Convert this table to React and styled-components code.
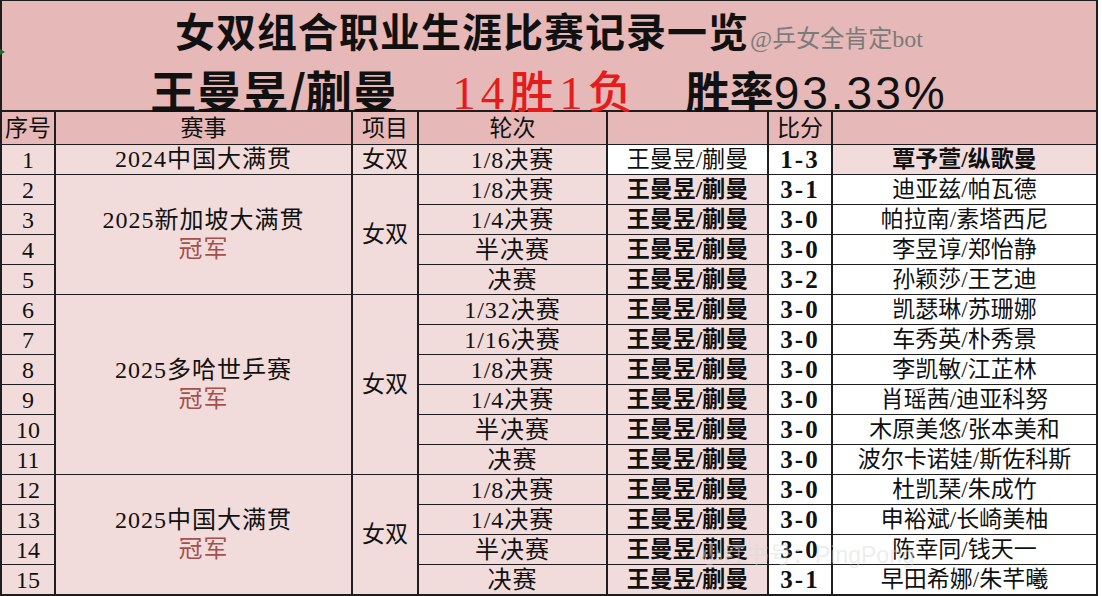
import React from "react";
import styled, { createGlobalStyle } from "styled-components";

const PINK = "#e6b8b7";
const LIGHT = "#f2dcdb";
const LINE = "#1e1e1e";

const GlobalStyle = createGlobalStyle`
  * { box-sizing: border-box; }
  html, body { margin: 0; background: #fff; }
  body {
    font-family: "Liberation Serif", "Noto Sans CJK SC", serif;
    color: #111;
  }
`;

const Sheet = styled.div`
  position: relative;
  width: 1098px;
`;

const TitleBlock = styled.header`
  height: 110px;
  background: ${PINK};
  border-top: 1px solid ${LINE};
  border-left: 2px solid ${LINE};
  border-right: 2px solid ${LINE};
  display: flex;
  flex-direction: column;
  align-items: center;
  padding-top: 9px;
`;

const TitleLine = styled.div`
  display: flex;
  align-items: baseline;
`;

const MainTitle = styled.h1`
  margin: 0;
  font-family: "Noto Sans CJK SC", sans-serif;
  font-weight: 700;
  font-size: 40px;
  line-height: 1;
  letter-spacing: 1px;
`;

const Credit = styled.span`
  font-size: 24px;
  color: #7b7b7b;
  margin-left: 1px;
`;

const StatsLine = styled.div`
  display: flex;
  align-items: baseline;
  gap: 54px;
  margin-top: 12px;
  line-height: 1;
`;

const PairName = styled.span`
  font-family: "Noto Sans CJK SC", sans-serif;
  font-weight: 600;
  font-size: 46px;
`;

const Record = styled.span`
  color: #e41c1c;
  font-size: 47px;
  letter-spacing: 5px;
  margin-right: -6px;
`;

const RecordWord = styled.span`
  font-family: "Noto Sans CJK SC", sans-serif;
  font-weight: 500;
  font-size: 45px;
`;

const Rate = styled.span`
  font-family: "Noto Sans CJK SC", sans-serif;
  font-weight: 600;
  font-size: 44px;
`;

const RateValue = styled.span`
  font-family: "Liberation Sans", sans-serif;
  font-weight: 400;
  font-size: 46px;
  letter-spacing: 3px;
`;

const Table = styled.div`
  display: grid;
  grid-template-columns: 52px 295px 64px 187px 159px 62px 263px;
  grid-template-rows: 32px repeat(15, 29px);
  gap: 1px 2px;
  background: ${LINE};
  border: 2px solid ${LINE};
`;

const Cell = styled.div`
  display: flex;
  align-items: center;
  justify-content: center;
  background: ${(p) => p.$bg || "#fff"};
  font-size: ${(p) => p.$size || 23}px;
  letter-spacing: ${(p) => p.$track || 0}px;
  line-height: 1;
  white-space: nowrap;
  font-weight: ${(p) => (p.$bold ? 600 : 400)};
  grid-row: ${(p) => (p.$span ? `span ${p.$span}` : "auto")};
`;

const HeadCell = styled(Cell)`
  background: ${PINK};
  font-size: 23px;
`;

const EventCell = styled(Cell)`
  flex-direction: column;
  line-height: 29px;
  font-size: 24px;
  letter-spacing: 1px;
`;

const Champion = styled.span`
  color: #a4504e;
`;

const Score = styled(Cell)`
  font-size: 25px;
  font-weight: 700;
  letter-spacing: 2px;
`;

const Watermark = styled.div`
  position: absolute;
  left: 700px;
  top: 536px;
  font-family: "Liberation Sans", "Noto Sans CJK SC", sans-serif;
  font-size: 23px;
  color: rgba(215, 215, 215, 0.45);
  pointer-events: none;
  white-space: nowrap;
`;

const Marker = styled.span`
  position: absolute;
  left: 0;
  top: 49px;
  width: 0;
  height: 0;
  border-top: 3px solid transparent;
  border-bottom: 3px solid transparent;
  border-left: 5px solid #1e6b2c;
`;

const PAIR = "王曼昱/蒯曼";

const groups = [
  {
    event: "2024中国大满贯",
    champion: false,
    matches: [["1/8决赛", "1-3", "覃予萱/纵歌曼"]],
  },
  {
    event: "2025新加坡大满贯",
    champion: true,
    matches: [
      ["1/8决赛", "3-1", "迪亚兹/帕瓦德"],
      ["1/4决赛", "3-0", "帕拉南/素塔西尼"],
      ["半决赛", "3-0", "李昱谆/郑怡静"],
      ["决赛", "3-2", "孙颖莎/王艺迪"],
    ],
  },
  {
    event: "2025多哈世乒赛",
    champion: true,
    matches: [
      ["1/32决赛", "3-0", "凯瑟琳/苏珊娜"],
      ["1/16决赛", "3-0", "车秀英/朴秀景"],
      ["1/8决赛", "3-0", "李凯敏/江芷林"],
      ["1/4决赛", "3-0", "肖瑶茜/迪亚科努"],
      ["半决赛", "3-0", "木原美悠/张本美和"],
      ["决赛", "3-0", "波尔卡诺娃/斯佐科斯"],
    ],
  },
  {
    event: "2025中国大满贯",
    champion: true,
    matches: [
      ["1/8决赛", "3-0", "杜凯琹/朱成竹"],
      ["1/4决赛", "3-0", "申裕斌/长崎美柚"],
      ["半决赛", "3-0", "陈幸同/钱天一"],
      ["决赛", "3-1", "早田希娜/朱芊曦"],
    ],
  },
];

const App = () => {
  let no = 0;
  return (
    <Sheet>
      <GlobalStyle />
      <Marker />
      <TitleBlock>
        <TitleLine>
          <MainTitle>女双组合职业生涯比赛记录一览</MainTitle>
          <Credit>@乒女全肯定bot</Credit>
        </TitleLine>
        <StatsLine>
          <PairName>{PAIR}</PairName>
          <Record>
            14<RecordWord>胜</RecordWord>1<RecordWord>负</RecordWord>
          </Record>
          <Rate>
            胜率<RateValue>93.33%</RateValue>
          </Rate>
        </StatsLine>
      </TitleBlock>
      <Table>
        <HeadCell>序号</HeadCell>
        <HeadCell>赛事</HeadCell>
        <HeadCell>项目</HeadCell>
        <HeadCell>轮次</HeadCell>
        <HeadCell />
        <HeadCell>比分</HeadCell>
        <HeadCell />
        {groups.map((g) =>
          g.matches.map(([round, score, rival], i) => {
            no += 1;
            const lost = score.startsWith("1");
            return (
              <React.Fragment key={no}>
                <Cell $bg={LIGHT} $size={24}>
                  {no}
                </Cell>
                {i === 0 && (
                  <EventCell $bg={LIGHT} $span={g.matches.length}>
                    <span>{g.event}</span>
                    {g.champion && <Champion>冠军</Champion>}
                  </EventCell>
                )}
                {i === 0 && (
                  <Cell $bg={LIGHT} $span={g.matches.length}>
                    女双
                  </Cell>
                )}
                <Cell $bg={LIGHT} $size={24} $track={1}>
                  {round}
                </Cell>
                <Cell $bg={lost ? "#fff" : LIGHT} $bold={!lost}>
                  {PAIR}
                </Cell>
                <Score>{score}</Score>
                <Cell $bg={lost ? LIGHT : "#fff"} $bold={lost}>
                  {rival}
                </Cell>
              </React.Fragment>
            );
          })
        )}
      </Table>
      <Watermark>小红书号：PingPong</Watermark>
    </Sheet>
  );
};

export default App;
